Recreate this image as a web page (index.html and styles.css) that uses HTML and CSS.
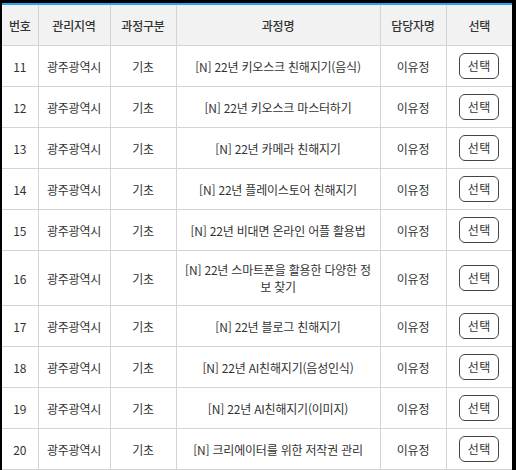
FILE: index.html
```html
<!DOCTYPE html>
<html lang="ko">
<head>
<meta charset="utf-8">
<link rel="stylesheet" href="styles.css">
</head>
<body>
<div class="frame">
<table class="course-table">
<colgroup>
<col class="c-no"><col class="c-region"><col class="c-type"><col class="c-name"><col class="c-mgr"><col class="c-sel">
</colgroup>
<thead>
<tr><th>번호</th><th>관리지역</th><th>과정구분</th><th>과정명</th><th>담당자명</th><th>선택</th></tr>
</thead>
<tbody>
<tr><td>11</td><td>광주광역시</td><td>기초</td><td class="name">[N] 22년 키오스크 친해지기(음식)</td><td>이유정</td><td><button class="pick">선택</button></td></tr>
<tr><td>12</td><td>광주광역시</td><td>기초</td><td class="name">[N] 22년 키오스크 마스터하기</td><td>이유정</td><td><button class="pick">선택</button></td></tr>
<tr><td>13</td><td>광주광역시</td><td>기초</td><td class="name">[N] 22년 카메라 친해지기</td><td>이유정</td><td><button class="pick">선택</button></td></tr>
<tr><td>14</td><td>광주광역시</td><td>기초</td><td class="name">[N] 22년 플레이스토어 친해지기</td><td>이유정</td><td><button class="pick">선택</button></td></tr>
<tr><td>15</td><td>광주광역시</td><td>기초</td><td class="name">[N] 22년 비대면 온라인 어플 활용법</td><td>이유정</td><td><button class="pick">선택</button></td></tr>
<tr><td>16</td><td>광주광역시</td><td>기초</td><td class="name">[N] 22년 스마트폰을 활용한 다양한 정보 찾기</td><td>이유정</td><td><button class="pick">선택</button></td></tr>
<tr><td>17</td><td>광주광역시</td><td>기초</td><td class="name">[N] 22년 블로그 친해지기</td><td>이유정</td><td><button class="pick">선택</button></td></tr>
<tr><td>18</td><td>광주광역시</td><td>기초</td><td class="name">[N] 22년 AI친해지기(음성인식)</td><td>이유정</td><td><button class="pick">선택</button></td></tr>
<tr><td>19</td><td>광주광역시</td><td>기초</td><td class="name">[N] 22년 AI친해지기(이미지)</td><td>이유정</td><td><button class="pick">선택</button></td></tr>
<tr><td>20</td><td>광주광역시</td><td>기초</td><td class="name">[N] 크리에이터를 위한 저작권 관리</td><td>이유정</td><td><button class="pick">선택</button></td></tr>
</tbody>
</table>
</div>
</body>
</html>
```
FILE: styles.css
```css
html, body {
  margin: 0;
  padding: 0;
  background: #000;
}
.frame {
  padding: 3px 4px 0 2px;
  height: 470px;
  box-sizing: border-box;
  overflow: hidden;
}
.course-table {
  width: 510px;
  table-layout: fixed;
  border-collapse: collapse;
  background: #fff;
  font-family: "Noto Sans CJK KR", "Noto Sans", sans-serif;
  font-size: 12px;
  letter-spacing: -0.2px;
  color: #333;
  border-top: 2px solid #2aa4ee;
}
.c-no { width: 36px; }
.c-region { width: 72px; }
.c-type { width: 66px; }
.c-name { width: 204px; }
.c-mgr { width: 66px; }
.c-sel { width: 66px; }
.course-table th,
.course-table td {
  border: 1px solid #d4d4d4;
  text-align: center;
  vertical-align: middle;
  line-height: 17px;
  height: 20px;
  padding: 10px 4px;
}
.course-table tr > :first-child { border-left: none; }
.course-table tr > :last-child { border-right: none; }
.course-table thead tr > * { border-top: none; }
.course-table th {
  background: #f2f2f2;
  font-weight: 500;
}
.course-table td.name {
  padding-left: 6px;
  padding-right: 6px;
  word-break: break-all;
}
.pick {
  display: block;
  width: 40px;
  height: 26px;
  margin: -3px auto;
  padding: 0;
  border: 1px solid #444;
  border-radius: 6px;
  background: #fff;
  color: #333;
  font-family: "Noto Sans CJK KR", "Noto Sans", sans-serif;
  font-size: 12px;
  letter-spacing: 0.5px;
  line-height: 24px;
}
```
